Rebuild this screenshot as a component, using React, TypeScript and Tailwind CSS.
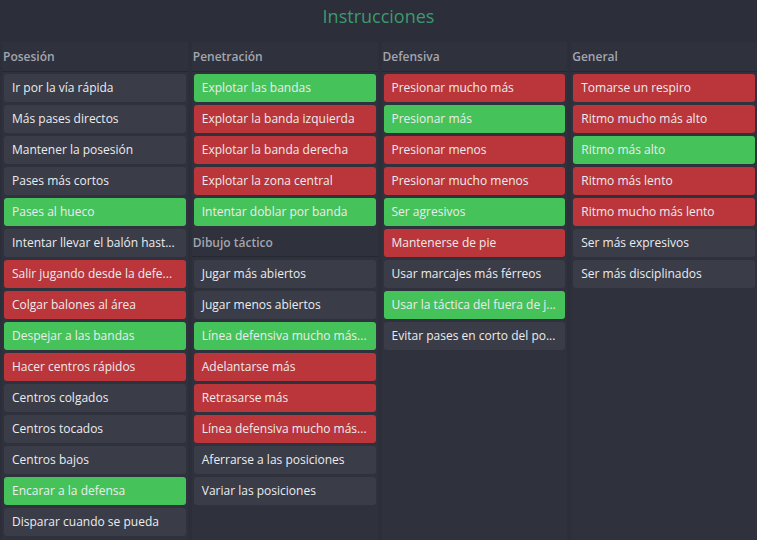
import React from "react";

type Tone = "g" | "r" | "n";

interface Item {
    label: string;
    tone: Tone;
}

interface Section {
    title: string;
    items: Item[];
}

// labels that the game cuts off are kept as they show on screen
const columns: Section[][] = [
    [
        {
            title: "Posesión",
            items: [
                { label: "Ir por la vía rápida", tone: "n" },
                { label: "Más pases directos", tone: "n" },
                { label: "Mantener la posesión", tone: "n" },
                { label: "Pases más cortos", tone: "n" },
                { label: "Pases al hueco", tone: "g" },
                { label: "Intentar llevar el balón hast...", tone: "n" },
                { label: "Salir jugando desde la defe...", tone: "r" },
                { label: "Colgar balones al área", tone: "r" },
                { label: "Despejar a las bandas", tone: "g" },
                { label: "Hacer centros rápidos", tone: "r" },
                { label: "Centros colgados", tone: "n" },
                { label: "Centros tocados", tone: "n" },
                { label: "Centros bajos", tone: "n" },
                { label: "Encarar a la defensa", tone: "g" },
                { label: "Disparar cuando se pueda", tone: "n" },
            ],
        },
    ],
    [
        {
            title: "Penetración",
            items: [
                { label: "Explotar las bandas", tone: "g" },
                { label: "Explotar la banda izquierda", tone: "r" },
                { label: "Explotar la banda derecha", tone: "r" },
                { label: "Explotar la zona central", tone: "r" },
                { label: "Intentar doblar por banda", tone: "g" },
            ],
        },
        {
            title: "Dibujo táctico",
            items: [
                { label: "Jugar más abiertos", tone: "n" },
                { label: "Jugar menos abiertos", tone: "n" },
                { label: "Línea defensiva mucho más...", tone: "g" },
                { label: "Adelantarse más", tone: "r" },
                { label: "Retrasarse más", tone: "r" },
                { label: "Línea defensiva mucho más...", tone: "r" },
                { label: "Aferrarse a las posiciones", tone: "n" },
                { label: "Variar las posiciones", tone: "n" },
            ],
        },
    ],
    [
        {
            title: "Defensiva",
            items: [
                { label: "Presionar mucho más", tone: "r" },
                { label: "Presionar más", tone: "g" },
                { label: "Presionar menos", tone: "r" },
                { label: "Presionar mucho menos", tone: "r" },
                { label: "Ser agresivos", tone: "g" },
                { label: "Mantenerse de pie", tone: "r" },
                { label: "Usar marcajes más férreos", tone: "n" },
                { label: "Usar la táctica del fuera de j...", tone: "g" },
                { label: "Evitar pases en corto del po...", tone: "n" },
            ],
        },
    ],
    [
        {
            title: "General",
            items: [
                { label: "Tomarse un respiro", tone: "r" },
                { label: "Ritmo mucho más alto", tone: "r" },
                { label: "Ritmo más alto", tone: "g" },
                { label: "Ritmo más lento", tone: "r" },
                { label: "Ritmo mucho más lento", tone: "r" },
                { label: "Ser más expresivos", tone: "n" },
                { label: "Ser más disciplinados", tone: "n" },
            ],
        },
    ],
];

function Pill({ item }: { item: Item }) {
    const bg =
        item.tone === "g"
            ? "bg-[#45c35a]"
            : item.tone === "r"
                ? "bg-[#ba363a]"
                : "bg-[#3a3c48]";
    return (
        <div className={`mx-[2px] h-[28px] rounded-[3px] pl-[8px] pr-[4px] flex items-center ${bg}`}>
            <span className="whitespace-nowrap text-[12px] text-[#ececee]">{item.label}</span>
        </div>
    );
}

export default function App() {
    return (
        <div
            className="w-[757px] h-[540px] overflow-hidden bg-[#2c2e39] flex flex-col"
            style={{ fontFamily: "'Open Sans', sans-serif" }}
        >
            <div className="h-[42px] pt-[5px] flex justify-center">
                <h1 className="text-[18px] leading-[22px] text-[#3b9a6f]">Instrucciones</h1>
            </div>

            <div className="flex-1 grid grid-cols-4 gap-[4px] pl-[2px]">
                {columns.map((sections, ci) => (
                    <div key={ci} className="bg-[#2f313d] flex flex-col gap-[3px]">
                        {sections.map((section, si) => (
                            <React.Fragment key={section.title}>
                                <div
                                    className={`flex items-center border-b border-[#262831] text-[12px] font-semibold text-[#a3a6ae] ${
                                        si === 0 ? "h-[30px] mb-[-2px]" : "h-[28px]"
                                    }`}
                                >
                                    <span className="pl-[1px]">{section.title}</span>
                                </div>
                                {section.items.map((item, ii) => (
                                    <div key={ii} className={si === 0 && ii === 0 ? "mt-[1px]" : ""}>
                                        <Pill item={item} />
                                    </div>
                                ))}
                            </React.Fragment>
                        ))}
                    </div>
                ))}
            </div>
        </div>
    );
}
